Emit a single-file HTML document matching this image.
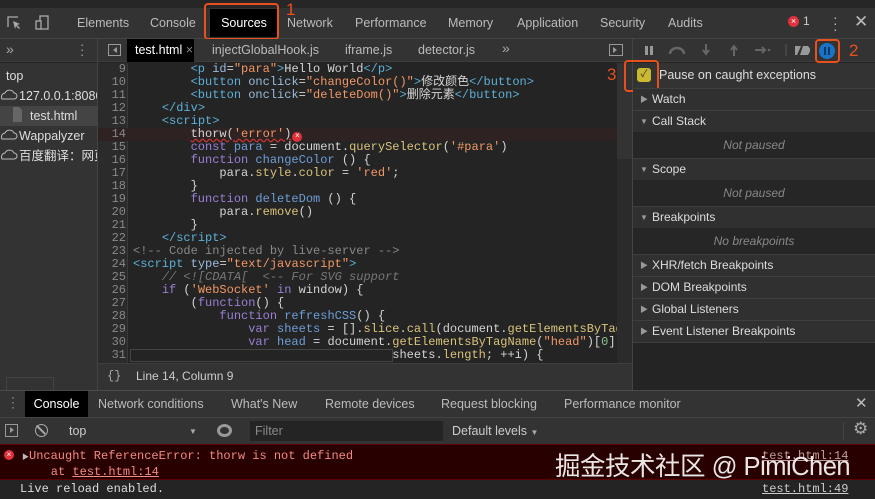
<!DOCTYPE html>
<html><head><meta charset="utf-8"><style>
*{margin:0;padding:0;box-sizing:border-box}
body{width:875px;height:499px;overflow:hidden;background:#242424;font-family:"Liberation Sans","Noto Sans CJK SC",sans-serif;color:#ccc;position:relative;font-size:12px}
.a{position:absolute}
.mono{font-family:"Liberation Mono","Noto Sans CJK SC",monospace}
.code div{height:13px;line-height:13px;white-space:pre;font-size:12px}
.t{color:#5db0d7}.n{color:#9bbbdc}.v{color:#f29766}.k{color:#9a7fd5}.d{color:#6e9ed8}.p{color:#d9c37a}.c{color:#777;font-style:italic}.g{color:#8bc48a}.w{color:#d4d4d4}
.sec{position:absolute;left:633px;width:242px;height:22px;background:#303030;border-top:1px solid #3f3f3f;color:#ddd;font-size:12px;line-height:21px;padding-left:19px}
.sec i{position:absolute;left:7px;font-style:normal;font-size:8px;color:#999}
.body{position:absolute;left:633px;width:242px;height:26px;background:#262626;color:#888;font-style:italic;text-align:center;line-height:26px;font-size:12px}
.ob{position:absolute;border:2px solid #e8501e;border-radius:4px}
.on{position:absolute;color:#e8501e;font-size:17px}
</style></head><body>
<div class="a" style="left:0;top:0;width:875px;height:10px;background:#262626"></div>
<div class="a" style="left:0;top:8px;width:875px;height:31px;background:#333;border-bottom:1px solid #444"></div>
<svg class="a" style="left:6px;top:14px" width="44" height="18" viewBox="0 0 44 18"><path d="M2 13V3h10" stroke="#aaa" fill="none" stroke-width="1.3"/><path d="M7 7l7 3-3 1 3 3-1 1-3-3-1 3z" fill="#aaa"/><rect x="34" y="2" width="8" height="13" fill="none" stroke="#aaa" stroke-width="1.3"/><rect x="30" y="7" width="5" height="8" fill="#333" stroke="#aaa" stroke-width="1.3"/></svg>
<div class="a" style="left:62px;top:8px;height:30px;line-height:30px;font-size:12.5px;color:#bbb;white-space:nowrap">
<span style="position:absolute;left:15px">Elements</span><span style="position:absolute;left:88px">Console</span>
<span style="position:absolute;left:148px;top:1px;width:68px;height:28px;background:#000;color:#fff;text-align:center;line-height:28px">Sources</span>
<span style="position:absolute;left:225px">Network</span><span style="position:absolute;left:293px">Performance</span><span style="position:absolute;left:386px">Memory</span><span style="position:absolute;left:455px">Application</span><span style="position:absolute;left:538px">Security</span><span style="position:absolute;left:606px">Audits</span></div>
<div class="ob" style="left:204px;top:3px;width:75px;height:37px"></div>
<div class="on" style="left:286px;top:0px">1</div>
<div class="a" style="left:788px;top:16px;width:11px;height:11px;border-radius:50%;background:#e0323c;color:#fff;font-size:9px;line-height:11px;text-align:center">×</div>
<div class="a" style="left:803px;top:14px;color:#ccc;font-size:12px">1</div>
<div class="a" style="left:833px;top:14px;color:#bbb;font-size:14px;line-height:6px">·<br>·<br>·</div>
<div class="a" style="left:854px;top:12px;color:#bbb;font-size:17px">✕</div>
<div class="a" style="left:0;top:39px;width:875px;height:23px;background:#333;border-bottom:1px solid #3d3d3d"></div>
<div class="a" style="left:6px;top:41px;color:#aaa;font-size:14px">»</div>
<div class="a" style="left:80px;top:42px;color:#aaa;font-size:13px;line-height:5px">·<br>·<br>·</div>
<div class="a" style="left:97px;top:39px;width:1px;height:351px;background:#444"></div>
<div class="a" style="left:108px;top:44px;width:13px;height:12px;border:1px solid #999"><div style="position:absolute;left:4px;top:2px;border-right:4px solid #999;border-top:3px solid transparent;border-bottom:3px solid transparent"></div></div>
<div class="a" style="left:127px;top:39px;width:67px;height:23px;background:#000;color:#fff;line-height:23px;padding-left:8px;font-size:12.5px">test.html <span style="color:#888">×</span></div>
<div class="a" style="left:212px;top:39px;line-height:23px;color:#bbb;font-size:12.5px">injectGlobalHook.js</div>
<div class="a" style="left:345px;top:39px;line-height:23px;color:#bbb;font-size:12.5px">iframe.js</div>
<div class="a" style="left:418px;top:39px;line-height:23px;color:#bbb;font-size:12.5px">detector.js</div>
<div class="a" style="left:502px;top:40px;color:#aaa;font-size:14px">»</div>
<div class="a" style="left:609px;top:44px;width:14px;height:12px;border:1px solid #999"><div style="position:absolute;left:3px;top:2px;border-left:4px solid #999;border-top:3px solid transparent;border-bottom:3px solid transparent"></div></div>
<div class="a" style="left:632px;top:39px;width:1px;height:351px;background:#444"></div>
<svg class="a" style="left:640px;top:42px" width="170" height="16" viewBox="0 0 170 16"><rect x="5" y="4" width="3" height="9" fill="#999"/><rect x="10" y="4" width="3" height="9" fill="#999"/><path d="M30 12a7 6 0 0 1 14 0" stroke="#666" stroke-width="2.5" fill="none"/><path d="M66 2v9M63 8l3 4 3-4" stroke="#666" stroke-width="2" fill="none"/><path d="M94 14V5M91 8l3-4 3 4" stroke="#666" stroke-width="2" fill="none"/><path d="M115 8h10M122 5l3 3-3 3" stroke="#666" stroke-width="2" fill="none"/><circle cx="129" cy="8" r="1.3" fill="#666"/><line x1="146" y1="2" x2="146" y2="14" stroke="#555"/><path d="M155 4h6l-4 9h-2zM163 4h5l3 4-3 5h-8z" fill="#999"/></svg>
<div class="a" style="left:815px;top:39px;width:25px;height:24px;border:2px solid #e8501e;border-radius:4px"></div>
<div class="a" style="left:819px;top:43px;width:16px;height:16px;border-radius:50%;background:#1a73c7"><div style="position:absolute;left:5px;top:4px;width:2px;height:8px;background:#0c3b69"></div><div style="position:absolute;left:9px;top:4px;width:2px;height:8px;background:#0c3b69"></div></div>
<div class="on" style="left:849px;top:41px">2</div>
<div class="a" style="left:0;top:63px;width:97px;height:327px;background:#333"></div>
<div class="a" style="left:0;top:66px;width:97px;color:#ddd;font-size:12.5px;line-height:20px;white-space:nowrap;overflow:hidden">
<div style="padding-left:6px">top</div>
<div style="padding-left:19px">127.0.0.1:8080</div>
<div style="padding-left:30px;background:#444">test.html</div>
<div style="padding-left:19px">Wappalyzer</div>
<div style="padding-left:19px">百度翻译：网页</div></div>
<svg class="a" style="left:0;top:84px" width="30" height="80"><path d="M2 15a4 4 0 0 1 3-6a5 5 0 0 1 9 0a3 3 0 0 1 0 6z" stroke="#bbb" fill="none"/><path d="M2 55a4 4 0 0 1 3-6a5 5 0 0 1 9 0a3 3 0 0 1 0 6z" stroke="#bbb" fill="none"/><path d="M2 75a4 4 0 0 1 3-6a5 5 0 0 1 9 0a3 3 0 0 1 0 6z" stroke="#bbb" fill="none"/><path d="M13 23h6l3 3v12h-9z" fill="#666"/></svg>
<div class="a" style="left:6px;top:377px;width:48px;height:13px;border:1px solid #444;border-bottom:none"></div>
<div class="a" style="left:98px;top:63px;width:30px;height:300px;background:#2b2b2b;border-right:1px solid #3a3a3a"></div>
<div class="a" style="left:98px;top:128px;width:519px;height:13px;background:#2e2222"></div>
<div class="a" style="left:617px;top:63px;width:15px;height:300px;background:#2b2b2b"></div>
<div class="a" style="left:617px;top:63px;width:15px;height:96px;background:#333"></div>
<div class="a mono code" style="left:98px;top:63px;width:28px;text-align:right;color:#888">
<div>9</div><div>10</div><div>11</div><div>12</div><div>13</div><div>14</div><div>15</div><div>16</div><div>17</div><div>18</div><div>19</div><div>20</div><div>21</div><div>22</div><div>23</div><div>24</div><div>25</div><div>26</div><div>27</div><div>28</div><div>29</div><div>30</div><div>31</div></div>
<div class="a mono code w" style="left:133px;top:63px;width:484px;overflow:hidden">
<div>        <span class="t">&lt;p</span> <span class="n">id</span>=<span class="v">"para"</span><span class="t">&gt;</span>Hello World<span class="t">&lt;/p&gt;</span></div>
<div>        <span class="t">&lt;button</span> <span class="n">onclick</span>=<span class="v">"changeColor()"</span><span class="t">&gt;</span>修改颜色<span class="t">&lt;/button&gt;</span></div>
<div>        <span class="t">&lt;button</span> <span class="n">onclick</span>=<span class="v">"deleteDom()"</span><span class="t">&gt;</span>删除元素<span class="t">&lt;/button&gt;</span></div>
<div>    <span class="t">&lt;/div&gt;</span></div>
<div>    <span class="t">&lt;script&gt;</span></div>
<div>        <span style="text-decoration:underline wavy #c33">thorw(<span class="v">'error'</span>)</span><span style="display:inline-block;margin-left:1px;width:10px;height:10px;border-radius:50%;background:#e0323c;color:#fff;font-size:8px;line-height:10px;text-align:center;vertical-align:-1px">×</span></div>
<div>        <span class="k">const</span> <span class="d">para</span> = document.<span class="p">querySelector</span>(<span class="v">'#para'</span>)</div>
<div>        <span class="k">function</span> <span class="d">changeColor</span> () {</div>
<div>            para.<span class="p">style</span>.<span class="p">color</span> = <span class="v">'red'</span>;</div>
<div>        }</div>
<div>        <span class="k">function</span> <span class="d">deleteDom</span> () {</div>
<div>            para.<span class="p">remove</span>()</div>
<div>        }</div>
<div>    <span class="t">&lt;/script&gt;</span></div>
<div><span style="color:#888">&lt;!-- Code injected by live-server --&gt;</span></div>
<div><span class="t">&lt;script</span> <span class="n">type</span>=<span class="v">"text/javascript"</span><span class="t">&gt;</span></div>
<div>    <span class="c">// &lt;![CDATA[  &lt;-- For SVG support</span></div>
<div>    <span class="k">if</span> (<span class="v">'WebSocket'</span> <span class="k">in</span> window) {</div>
<div>        (<span class="k">function</span>() {</div>
<div>            <span class="k">function</span> <span class="d">refreshCSS</span>() {</div>
<div>                <span class="k">var</span> <span class="d">sheets</span> = [].<span class="p">slice</span>.<span class="p">call</span>(document.<span class="p">getElementsByTagName</span>(<span class="v">"link"</span>));</div>
<div>                <span class="k">var</span> <span class="d">head</span> = document.<span class="p">getElementsByTagName</span>(<span class="v">"head"</span>)[<span class="g">0</span>];</div>
<div>                                    sheets.<span class="p">length</span>; ++i) {</div>
</div>
<div class="a" style="left:130px;top:349px;width:263px;height:13px;background:#242424;border:1px solid #444"></div>
<div class="a" style="left:98px;top:363px;width:534px;height:27px;background:#333;border-top:1px solid #3d3d3d"></div>
<div class="a mono" style="left:107px;top:369px;color:#aaa;font-size:12px">{}</div>
<div class="a" style="left:136px;top:369px;color:#ccc;font-size:12px">Line 14, Column 9</div>
<div class="a" style="left:633px;top:63px;width:242px;height:327px;background:#242424"></div>
<div class="a" style="left:633px;top:63px;width:242px;height:25px;background:#333"></div>
<div class="a" style="left:637px;top:68px;width:14px;height:14px;background:#c9b830;border-radius:3px;color:#333;font-size:10px;line-height:14px;text-align:center">✓</div>
<div class="a" style="left:659px;top:68px;color:#ddd;font-size:12.5px">Pause on caught exceptions</div>
<div class="ob" style="left:624px;top:60px;width:35px;height:32px"></div>
<div class="on" style="left:607px;top:65px">3</div>
<div class="sec" style="top:88px"><i>▶</i>Watch</div>
<div class="sec" style="top:110px"><i>▼</i>Call Stack</div>
<div class="body" style="top:132px">Not paused</div>
<div class="sec" style="top:158px"><i>▼</i>Scope</div>
<div class="body" style="top:180px">Not paused</div>
<div class="sec" style="top:206px"><i>▼</i>Breakpoints</div>
<div class="body" style="top:228px">No breakpoints</div>
<div class="sec" style="top:254px"><i>▶</i>XHR/fetch Breakpoints</div>
<div class="sec" style="top:276px"><i>▶</i>DOM Breakpoints</div>
<div class="sec" style="top:298px"><i>▶</i>Global Listeners</div>
<div class="sec" style="top:320px;border-bottom:1px solid #3f3f3f;height:23px"><i>▶</i>Event Listener Breakpoints</div>
<div class="a" style="left:0;top:390px;width:875px;height:28px;background:#333;border-top:1px solid #4a4a4a;border-bottom:1px solid #444"></div>
<div class="a" style="left:11px;top:395px;color:#aaa;font-size:12px;line-height:5px">·<br>·<br>·</div>
<div class="a" style="left:25px;top:391px;width:63px;height:26px;background:#000;color:#fff;line-height:26px;text-align:center;font-size:12.5px">Console</div>
<div class="a" style="top:391px;left:0;line-height:26px;color:#bbb;font-size:12.5px;white-space:nowrap"><span class="a" style="left:98px">Network conditions</span><span class="a" style="left:231px">What's New</span><span class="a" style="left:325px">Remote devices</span><span class="a" style="left:441px">Request blocking</span><span class="a" style="left:564px">Performance monitor</span></div>
<div class="a" style="left:855px;top:394px;color:#bbb;font-size:15px">✕</div>
<div class="a" style="left:0;top:418px;width:875px;height:26px;background:#333"></div>
<div class="a" style="left:5px;top:424px;width:13px;height:13px;border:1px solid #999"><div style="position:absolute;left:4px;top:2px;border-left:4px solid #999;border-top:3px solid transparent;border-bottom:3px solid transparent"></div></div>
<div class="a" style="left:35px;top:424px;width:13px;height:13px;border:1.5px solid #aaa;border-radius:50%"><div style="position:absolute;left:4px;top:-1px;width:1.5px;height:12px;background:#aaa;transform:rotate(-45deg)"></div></div>
<div class="a" style="left:69px;top:424px;color:#ccc;font-size:12.5px">top</div>
<div class="a" style="left:189px;top:427px;color:#aaa;font-size:8px">▼</div>
<div class="a" style="left:217px;top:424px;width:15px;height:13px;border:3px solid #999;border-radius:50%"><div style="position:absolute;left:2px;top:1px;width:5px;height:5px;background:#333;border-radius:50%"></div></div>
<div class="a" style="left:250px;top:421px;width:193px;height:20px;background:#242424;color:#888;padding-left:5px;line-height:20px;font-size:12.5px">Filter</div>
<div class="a" style="left:452px;top:424px;color:#ccc;font-size:12.5px">Default levels <span style="font-size:8px;color:#aaa">▼</span></div>
<div class="a" style="left:843px;top:422px;width:1px;height:18px;background:#444"></div>
<div class="a" style="left:853px;top:419px;color:#aaa;font-size:17px">⚙</div>
<div class="a" style="left:0;top:444px;width:875px;height:36px;background:#290000;border-top:1px solid #5c0000;border-bottom:1px solid #5c0000"></div>
<div class="a" style="left:4px;top:450px;width:10px;height:10px;border-radius:50%;background:#e0323c;color:#fff;font-size:8px;line-height:10px;text-align:center">×</div>
<div class="a mono" style="left:22px;top:449px;color:#f28b82;font-size:12px;line-height:14px;white-space:pre"><span style="font-size:7px;color:#bbb">▶</span>Uncaught ReferenceError: thorw is not defined
    at <span style="text-decoration:underline">test.html:14</span></div>
<div class="a mono" style="left:762px;top:449px;color:#c0a0a0;font-size:12px;text-decoration:underline">test.html:14</div>
<div class="a" style="left:555px;top:452px;color:#fff;font-size:25.5px;line-height:30px;white-space:nowrap;opacity:.9;letter-spacing:-.5px">掘金技术社区 @ PimiChen</div>
<div class="a" style="left:0;top:481px;width:875px;height:18px;background:#242424"></div>
<div class="a mono" style="left:20px;top:482px;color:#ddd;font-size:12px">Live reload enabled.</div>
<div class="a mono" style="left:762px;top:482px;color:#ccc;font-size:12px;text-decoration:underline">test.html:49</div>
</body></html>
